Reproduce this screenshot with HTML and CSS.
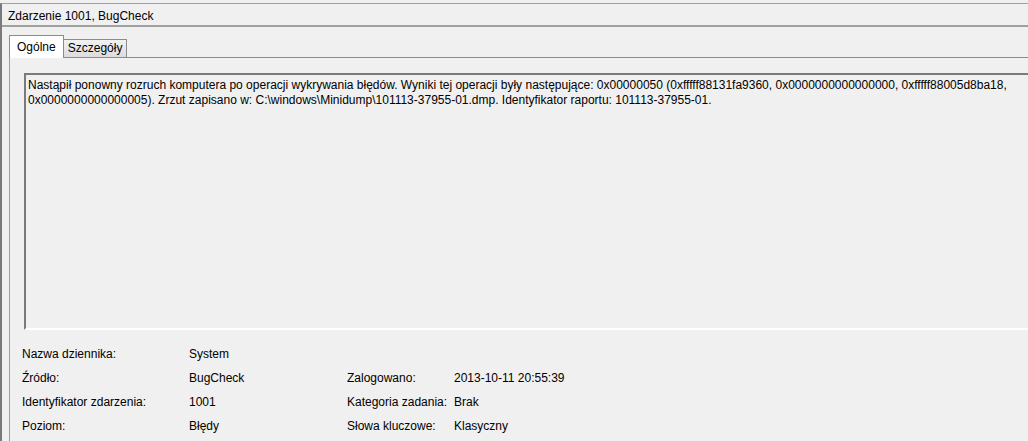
FILE: index.html
```html
<!DOCTYPE html>
<html lang="pl">
<head>
    <meta charset="UTF-8">
    <title>Zdarzenie 1001, BugCheck</title>
    <link rel="stylesheet" href="styles.css">
</head>
<body>
    <div class="window">
        <div class="title">Zdarzenie 1001, BugCheck</div>
        <div class="content">
            <div class="tabs">
                <div class="tab active">Ogólne</div>
                <div class="tab">Szczegóły</div>
            </div>
            <div class="page">
                <div class="message">Nastąpił ponowny rozruch komputera po operacji wykrywania błędów. Wyniki tej operacji były następujące: 0x00000050 (0xfffff88131fa9360, 0x0000000000000000, 0xfffff88005d8ba18, 0x0000000000000005). Zrzut zapisano w: C:\windows\Minidump\101113-37955-01.dmp. Identyfikator raportu: 101113-37955-01.</div>
                <div class="details">
                    <div class="label">Nazwa dziennika:</div>
                    <div class="value">System</div>
                    <div class="label"></div>
                    <div class="value"></div>

                    <div class="label">Źródło:</div>
                    <div class="value">BugCheck</div>
                    <div class="label">Zalogowano:</div>
                    <div class="value">2013-10-11 20:55:39</div>

                    <div class="label">Identyfikator zdarzenia:</div>
                    <div class="value">1001</div>
                    <div class="label">Kategoria zadania:</div>
                    <div class="value">Brak</div>

                    <div class="label">Poziom:</div>
                    <div class="value">Błędy</div>
                    <div class="label">Słowa kluczowe:</div>
                    <div class="value">Klasyczny</div>
                </div>
            </div>
        </div>
    </div>
</body>
</html>
```

FILE: styles.css
```css
body {
    margin: 0;
    background: #f0f0f0;
    font-family: 'Liberation Sans', Arial, sans-serif;
    font-size: 12px;
    color: #000;
    overflow: hidden;
}
.window {
    height: 441px;
    border-left: 2px solid #7a7a7a;
    border-top: 1px solid #a0a0a0;
    margin-top: 3px;
    box-sizing: border-box;
}
.title {
    height: 19px;
    line-height: 20px;
    padding: 2px 0 0 6px;
    border-bottom: 2px solid #a0a0a0;
}
.content {
    padding: 7px 0 0 7px;
}
.tabs {
    display: flex;
    align-items: flex-end;
    height: 23px;
}
.tab {
    border: 1px solid #898c95;
    border-bottom: none;
    background: linear-gradient(#f2f2f2, #dcdcdc);
    padding: 0 4px;
    height: 17px;
    line-height: 17px;
    margin-left: -1px;
}
.tab.active {
    background: #fff;
    height: 22px;
    line-height: 22px;
    padding: 0 7px;
    margin-left: 0;
    margin-bottom: -1px;
    position: relative;
}
.page {
    border-top: 1px solid #898c95;
    border-left: 1px solid #a0a0a0;
    height: 400px;
}
.message {
    margin: 15px 0 0 14px;
    height: 250px;
    border-top: 2px solid #7a7a7a;
    border-left: 2px solid #7a7a7a;
    border-bottom: 2px solid #fff;
    padding: 3px 0 0 2px;
    line-height: 15px;
}
.details {
    display: grid;
    grid-template-columns: 167px 158px 107px 1fr;
    grid-auto-rows: 24px;
    padding: 17px 0 0 12px;
}
```
